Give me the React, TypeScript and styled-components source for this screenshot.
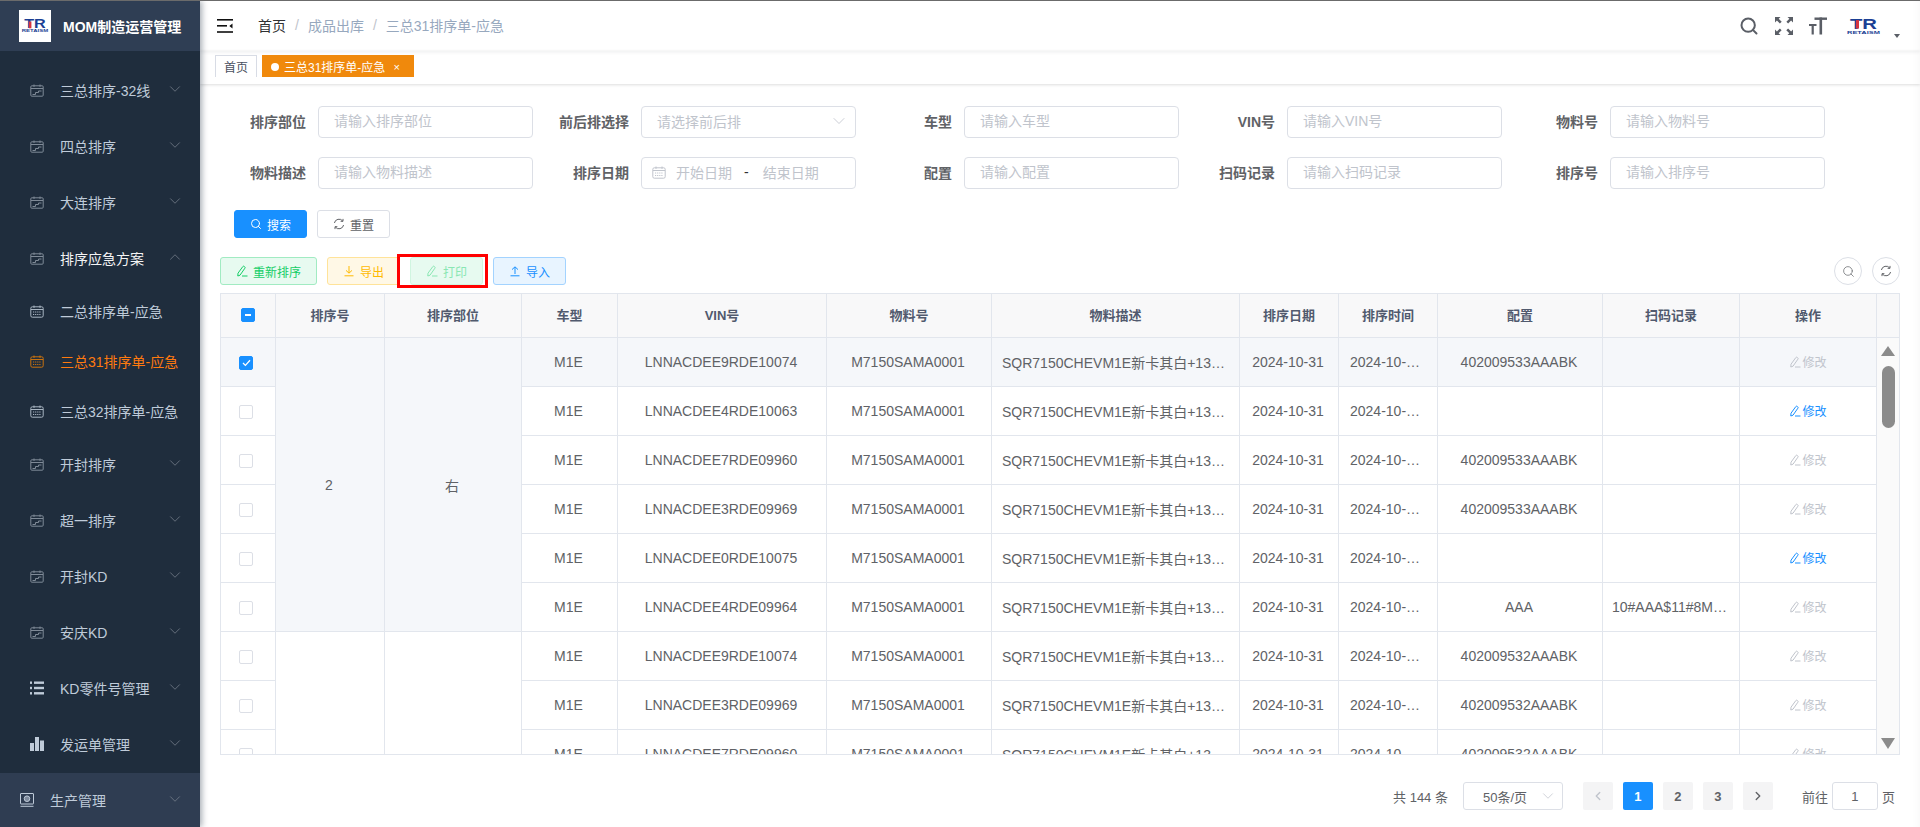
import React from "react";
import styled, { createGlobalStyle, css } from "styled-components";
import { Search, ChevronDown, ChevronUp, ChevronLeft, ChevronRight } from "lucide-react";

const GlobalStyle = createGlobalStyle`
  html, body {
    margin: 0;
    height: 100%;
    overflow: hidden;
    font-family: "Liberation Sans", "Noto Sans CJK SC", sans-serif;
    background: #fff;
  }
  * { box-sizing: border-box; }
  #root { height: 100%; }
`;

const Page = styled.div`
  display: flex;
  height: 827px;
  border-top: 1px solid #6b6b6b;
  overflow: hidden;
`;

/* sidebar */
const Sidebar = styled.aside`
  width: 200px;
  flex: none;
  background: #1f2d3d;
  box-shadow: 2px 0 6px rgba(0, 21, 41, 0.35);
  overflow: hidden;
  z-index: 2;
`;

const Brand = styled.div`
  height: 50px;
  background: #2f3e54;
  display: flex;
  align-items: center;
  padding-left: 19px;
  gap: 12px;
  margin-bottom: 12px;
`;

const BrandBox = styled.div`
  width: 32px;
  height: 32px;
  background: #fff;
  display: flex;
  align-items: center;
  justify-content: center;
`;

const BrandName = styled.span`
  color: #fff;
  font-size: 14px;
  font-weight: 700;
`;

const MenuRow = styled.div<{ $sub?: boolean; $active?: boolean; $root?: boolean; $open?: boolean }>`
  height: ${(p) => (p.$sub ? 50 : 56)}px;
  display: flex;
  align-items: center;
  font-size: 14px;
  color: ${(p) => (p.$active ? "#ff7a0f" : p.$open ? "#f4f4f5" : "#bfcbd9")};
  padding: 0 16px 0 ${(p) => (p.$root ? 20 : 30)}px;
  background: ${(p) => (p.$root ? "#2f3d52" : "transparent")};
`;

const MenuIcon = styled.span`
  width: 14px;
  height: 14px;
  margin: -2px 16px 0 0;
  display: inline-flex;
  align-items: center;
  justify-content: center;
  flex: none;
`;

const MenuText = styled.span`
  flex: 1;
  margin-top: -3px;
  white-space: nowrap;
`;

const MenuArrow = styled.span`
  color: #79838f;
  display: inline-flex;
  margin-top: -5px;
`;

/* main column */
const Main = styled.main`
  flex: 1;
  min-width: 0;
  display: flex;
  flex-direction: column;
  box-shadow: inset -10px 0 10px -10px rgba(0, 0, 0, 0.05);
`;

const Navbar = styled.header`
  height: 50px;
  flex: none;
  display: flex;
  align-items: center;
  padding: 0 20px 0 17px;
  box-shadow: 0 1px 4px rgba(0, 21, 41, 0.08);
`;

const Hamburger = styled.span`
  display: inline-flex;
  margin-right: 25px;
`;

const Crumbs = styled.nav`
  flex: 1;
  display: flex;
  align-items: center;
  padding-bottom: 2px;
  font-size: 14px;
  color: #97a8be;
`;

const CrumbHome = styled.span`
  color: #303133;
`;

const CrumbSep = styled.span`
  margin: 0 9px;
  color: #c0c4cc;
`;

const NavTools = styled.div`
  display: flex;
  align-items: center;
  color: #5a5e66;
`;

const NavTool = styled.span`
  display: inline-flex;
  margin-right: 16px;
`;

const NavLogo = styled.span`
  display: inline-flex;
  margin-left: 3px;
`;

const Caret = styled.span`
  width: 0;
  height: 0;
  margin: 20px 0 0 13px;
  border-left: 3.5px solid transparent;
  border-right: 3.5px solid transparent;
  border-top: 4px solid #5a5e66;
`;

const TagBar = styled.div`
  height: 33px;
  flex: none;
  display: flex;
  align-items: flex-start;
  gap: 5px;
  padding: 4px 0 0 15px;
  box-shadow: 0 1px 3px rgba(0, 0, 0, 0.12), 0 0 3px rgba(0, 0, 0, 0.04);
`;

const Tag = styled.div<{ $active?: boolean }>`
  height: 22px;
  display: flex;
  align-items: center;
  font-size: 12px;
  padding: ${(p) => (p.$active ? "0 13px 0 8px" : "0 8px")};
  color: ${(p) => (p.$active ? "#fff" : "#495060")};
  background: ${(p) => (p.$active ? "#f0890c" : "#fff")};
  border: 1px solid ${(p) => (p.$active ? "#f0890c" : "#d8dce5")};
  border-bottom: none;
`;

const TagDot = styled.span`
  width: 8px;
  height: 8px;
  border-radius: 50%;
  background: #fff;
  margin-right: 5px;
`;

const TagClose = styled.span`
  font-size: 11px;
  margin-left: 8px;
`;

const Content = styled.div`
  flex: 1;
  min-height: 0;
  padding: 22px 20px 0;
`;

/* filter form */
const FilterGrid = styled.div`
  display: grid;
  grid-template-columns: repeat(5, 315px);
  column-gap: 8px;
  row-gap: 19px;
  margin-left: -2px;
`;

const Field = styled.label`
  display: flex;
  align-items: center;
`;

const FieldName = styled.span`
  width: 100px;
  padding: 0 12px 2px 0;
  text-align: right;
  font-size: 14px;
  font-weight: 700;
  color: #606266;
  white-space: nowrap;
`;

const boxStyle = css`
  width: 215px;
  height: 32px;
  border: 1px solid #dcdfe6;
  border-radius: 4px;
  background: #fff;
  font-family: inherit;
  font-size: 14px;
`;

const TextInput = styled.input`
  ${boxStyle}
  padding: 0 15px 2px;
  outline: none;
  &::placeholder { color: #c0c4cc; opacity: 1; }
`;

const SelectBox = styled.div`
  ${boxStyle}
  display: flex;
  align-items: center;
  justify-content: space-between;
  padding: 0 6px 2px 15px;
  color: #c0c4cc;
`;

const DateBox = styled.div`
  ${boxStyle}
  display: flex;
  align-items: center;
  padding: 0 10px 2px;
  color: #c0c4cc;
`;

const DateText = styled.span`
  margin-left: 10px;
  white-space: nowrap;
`;

const DateDash = styled.span`
  color: #303133;
  margin: 0 14px 0 12px;
`;

const ButtonRow = styled.div<{ $top: number; $left?: number }>`
  display: flex;
  align-items: center;
  gap: 10px;
  margin-top: ${(p) => p.$top}px;
  padding-left: ${(p) => p.$left ?? 0}px;
`;

const palette = {
  blue: { bg: "#1890ff", border: "#1890ff", color: "#fff" },
  plain: { bg: "#fff", border: "#dcdfe6", color: "#606266" },
  green: { bg: "#e7faf0", border: "#a1ebc2", color: "#13ce66" },
  greenOff: { bg: "#e7faf0", border: "#d0f5e0", color: "#89e7b3" },
  yellow: { bg: "#fff8e6", border: "#ffe399", color: "#ffba00" },
  sky: { bg: "#e8f4ff", border: "#a3d3ff", color: "#1890ff" },
};

const Btn = styled.button<{ $kind: keyof typeof palette }>`
  height: 28px;
  display: inline-flex;
  align-items: center;
  gap: 5px;
  padding: 0 15px;
  border-radius: 3px;
  border: 1px solid ${(p) => palette[p.$kind].border};
  background: ${(p) => palette[p.$kind].bg};
  color: ${(p) => palette[p.$kind].color};
  font-family: inherit;
  font-size: 12px;
`;

const Highlighted = styled.span`
  position: relative;
  display: inline-flex;
`;

const RedBox = styled.span`
  position: absolute;
  left: -13px;
  top: -3px;
  width: 91px;
  height: 34px;
  border: 3px solid #f00;
  pointer-events: none;
`;

const Spacer = styled.span`
  flex: 1;
`;

const RoundBtn = styled.button`
  width: 28px;
  height: 28px;
  padding: 0;
  border-radius: 50%;
  border: 1px solid #dcdfe6;
  background: #fff;
  color: #606266;
  display: inline-flex;
  align-items: center;
  justify-content: center;
`;

/* table */
const TableWrap = styled.div`
  margin-top: 8px;
  width: 1680px;
  height: 462px;
  border: 1px solid #e2e6ed;
  overflow: hidden;
`;

const HeadRow = styled.div`
  display: flex;
  height: 44px;
  background: #f8f8f9;
`;

const BodyArea = styled.div`
  display: flex;
  height: 416px;
`;

const BodyClip = styled.div`
  width: 1656px;
  height: 416px;
  overflow: hidden;
`;

const Grid = styled.table`
  width: 1656px;
  table-layout: fixed;
  border-collapse: separate;
  border-spacing: 0;
  font-size: 14px;
  color: #606266;
`;

const Th = styled.th`
  height: 44px;
  padding: 0 10px 2px;
  background: #f8f8f9;
  color: #515a6e;
  font-size: 13px;
  font-weight: 700;
  border-right: 1px solid #e2e6ed;
  border-bottom: 1px solid #e2e6ed;
  text-align: center;
`;

const Td = styled.td<{ $shade?: boolean; $pad?: number }>`
  height: 49px;
  padding: 0 ${(p) => (p.$pad ?? 10) + 2}px 0 ${(p) => p.$pad ?? 10}px;
  background: ${(p) => (p.$shade ? "#f5f7fa" : "#fff")};
  border-right: 1px solid #e2e6ed;
  border-bottom: 1px solid #e2e6ed;
  text-align: center;
  white-space: nowrap;
  overflow: hidden;
  text-overflow: ellipsis;
`;

const GutterHead = styled.div`
  flex: 1;
  border-bottom: 1px solid #e2e6ed;
`;

const Check = styled.span<{ $on?: boolean; $row?: boolean }>`
  width: 14px;
  height: 14px;
  display: inline-flex;
  align-items: center;
  justify-content: center;
  vertical-align: middle;
  border-radius: 2px;
  border: 1px solid ${(p) => (p.$on ? "#1890ff" : "#dcdfe6")};
  background: ${(p) => (p.$on ? "#1890ff" : "#fff")};
  margin-right: ${(p) => (p.$row ? 2 : 0)}px;
`;

const CheckDash = styled.span`
  width: 6px;
  height: 2px;
  background: #fff;
`;

const EditLink = styled.span<{ $off?: boolean }>`
  display: inline-flex;
  align-items: center;
  gap: 1px;
  margin-left: 2px;
  font-size: 12px;
  color: ${(p) => (p.$off ? "#c0c4cc" : "#1890ff")};
`;

const Scrollbar = styled.div`
  flex: 1;
  background: #fafafa;
  display: flex;
  flex-direction: column;
  align-items: center;
  padding: 8px 0 5px;
`;

const ScrollThumb = styled.div`
  width: 13px;
  height: 62px;
  border-radius: 7px;
  background: #8b8b8b;
  margin-top: 10px;
`;

const ScrollArrow = styled.span<{ $down?: boolean }>`
  width: 0;
  height: 0;
  border-left: 7px solid transparent;
  border-right: 7px solid transparent;
  ${(p) =>
    p.$down
      ? css`
          border-top: 11px solid #8b8b8b;
          margin-top: auto;
        `
      : css`
          border-bottom: 10px solid #8b8b8b;
        `}
`;

/* pagination */
const Pager = styled.div`
  margin-top: 27px;
  height: 28px;
  display: flex;
  align-items: center;
  justify-content: flex-end;
  padding-right: 5px;
  font-size: 13px;
  color: #606266;
`;

const PageSize = styled.div`
  width: 100px;
  height: 28px;
  margin: 0 20px 0 15px;
  padding: 0 5px 0 19px;
  display: flex;
  align-items: center;
  justify-content: space-between;
  border: 1px solid #dcdfe6;
  border-radius: 3px;
`;

const PageBtn = styled.button<{ $current?: boolean; $off?: boolean }>`
  width: 30px;
  height: 28px;
  margin-right: 10px;
  padding: 0;
  border: none;
  border-radius: 2px;
  font-family: inherit;
  font-size: 13px;
  font-weight: 700;
  display: inline-flex;
  align-items: center;
  justify-content: center;
  background: ${(p) => (p.$current ? "#1890ff" : "#f4f4f5")};
  color: ${(p) => (p.$current ? "#fff" : p.$off ? "#c0c4cc" : "#606266")};
`;

const JumpInput = styled.div`
  width: 46px;
  height: 28px;
  margin: 0 4px;
  border: 1px solid #dcdfe6;
  border-radius: 3px;
  display: flex;
  align-items: center;
  justify-content: center;
`;

const JumpLabel = styled.span`
  margin-left: 19px;
`;

/* drawn icons */
const PlanIcon = ({ dim }: { dim?: boolean }) => (
  <svg width="14" height="13" viewBox="0 0 14 13" fill="none" stroke={dim ? "#7f8a97" : "currentColor"} strokeWidth="1">
    <rect x="0.8" y="1.8" width="12.4" height="10.4" rx="1" />
    <path d="M1 4.5h12M4 .5v2.4M10 .5v2.4" />
    <path d="M2.5 10.5h3V8.5h3V7h3" />
  </svg>
);

const DayIcon = ({ color = "#a9b5c2" }: { color?: string }) => (
  <svg width="14" height="13" viewBox="0 0 14 13" fill="none" stroke={color} strokeWidth="1">
    <rect x="0.8" y="1.8" width="12.4" height="10.4" rx="1.5" />
    <path d="M1 4.5h12M4 .5v2.4M10 .5v2.4" />
    <path d="M3 7h8M3 9.5h8" strokeDasharray="1.2 0.9" />
  </svg>
);

const ListIcon = () => (
  <svg width="14" height="14" viewBox="0 0 14 14" fill="#bfcbd9">
    <rect x="0" y="0.5" width="2" height="2.4" />
    <rect x="4" y="0.5" width="10" height="2.4" />
    <rect x="0" y="5.8" width="2" height="2.4" />
    <rect x="4" y="5.8" width="10" height="2.4" />
    <rect x="0" y="11.1" width="2" height="2.4" />
    <rect x="4" y="11.1" width="10" height="2.4" />
  </svg>
);

const BarsIcon = () => (
  <svg width="14" height="14" viewBox="0 0 14 14" fill="#bfcbd9">
    <rect x="0" y="6" width="4" height="8" />
    <rect x="5" y="0" width="4" height="14" />
    <rect x="10" y="3.5" width="4" height="10.5" />
  </svg>
);

const MonitorIcon = () => (
  <svg width="14" height="14" viewBox="0 0 14 14" fill="none" stroke="#bfcbd9" strokeWidth="1">
    <rect x="0.5" y="0.5" width="13" height="10.5" rx="0.5" />
    <circle cx="7" cy="5.7" r="2.8" fill="#bfcbd9" fillOpacity="0.55" />
    <path d="M0.5 13.3h13" />
  </svg>
);

const Pencil = ({ size = 12 }: { size?: number }) => (
  <svg width={size} height={size} viewBox="0 0 12 12" fill="none" stroke="currentColor" strokeWidth="1">
    <path d="M2 8.2 6.8 1.6a1 1 0 0 1 1.4-.2l.5.4a1 1 0 0 1 .2 1.4L4 10.2l-2.2.8z" />
    <path d="M6 11h5.5" />
  </svg>
);

const ArrowLine = ({ up }: { up?: boolean }) => (
  <svg width="12" height="12" viewBox="0 0 12 12" fill="none" stroke="currentColor" strokeWidth="1">
    {up ? <path d="M6 9V2M3 4.6 6 1.8l3 2.8M1.5 10.8h9" /> : <path d="M6 1v7M3 5.4l3 2.8 3-2.8M1.5 10.8h9" />}
  </svg>
);

const Refresh = () => (
  <svg width="12" height="12" viewBox="0 0 12 12" fill="none" stroke="currentColor" strokeWidth="1">
    <path d="M1.4 5A4.7 4.7 0 0 1 9.8 3.1M10.6 7a4.7 4.7 0 0 1-8.4 1.9" />
    <path d="M10 .9v2.4H7.6M2 11.1V8.7h2.4" />
  </svg>
);

const MenuLines = () => (
  <svg width="16" height="14" viewBox="0 0 16 14" fill="#111">
    <rect x="0" y="0" width="16" height="1.6" />
    <rect x="0" y="6" width="10" height="1.6" />
    <rect x="0" y="12.2" width="16" height="1.6" />
    <path d="M15.5 4.4v5L12.3 6.9z" />
  </svg>
);

const Corners = () => (
  <svg width="18" height="18" viewBox="0 0 18 18" fill="currentColor">
    <path d="M0 0h5.5L3.7 1.8l3 3-1.8 1.8-3-3L0 5.5zM18 0v5.5l-1.9-1.9-3 3-1.7-1.8 3-3L12.5 0zM0 18v-5.5l1.9 1.9 3-3 1.7 1.8-3 3L5.5 18zM18 18h-5.5l1.8-1.8-3-3 1.8-1.8 3 3 1.9-1.9z" />
  </svg>
);

const FontSizeIcon = () => (
  <svg width="18" height="18" viewBox="0 0 18 18" fill="currentColor">
    <rect x="5.5" y="0.5" width="12.5" height="2.4" />
    <rect x="10.5" y="0.5" width="2.6" height="17" />
    <rect x="0" y="7" width="7.5" height="2" />
    <rect x="2.6" y="7" width="2.2" height="10.5" />
  </svg>
);

const LogoMark = ({ width }: { width: number }) => (
  <svg width={width} height={width * 0.52} viewBox="0 0 35 18">
    <text x="4" y="11.5" textLength="27" lengthAdjust="spacingAndGlyphs" fontFamily="Liberation Sans" fontSize="15" fontWeight="700" fill="#1b3f94">
      TR
    </text>
    <rect x="10" y="3" width="3" height="8.5" fill="#d8343f" />
    <text x="1" y="16.5" textLength="33" lengthAdjust="spacingAndGlyphs" fontFamily="Liberation Sans" fontSize="4" fontWeight="700" fill="#1b3f94">
      RETAISM
    </text>
  </svg>
);

const PLAN = <PlanIcon dim />;

const topMenu = [
  { label: "三总排序-32线" },
  { label: "四总排序" },
  { label: "大连排序" },
];

const lowerMenu = [
  { label: "开封排序", icon: PLAN },
  { label: "超一排序", icon: PLAN },
  { label: "开封KD", icon: PLAN },
  { label: "安庆KD", icon: PLAN },
  { label: "KD零件号管理", icon: <ListIcon /> },
  { label: "发运单管理", icon: <BarsIcon /> },
];

const columns = [55, 109, 137, 96, 209, 165, 248, 99, 99, 165, 137, 137];
const headings = ["", "排序号", "排序部位", "车型", "VIN号", "物料号", "物料描述", "排序日期", "排序时间", "配置", "扫码记录", "操作"];

const DESC = "SQR7150CHEVM1E新卡其白+13500";
const TIME = "2024-10-31 08";
const SCAN = "10#AAA$11#8M71";

const rows = [
  { vin: "LNNACDEE9RDE10074", conf: "402009533AAABK", scan: "", off: true },
  { vin: "LNNACDEE4RDE10063", conf: "", scan: "", off: false },
  { vin: "LNNACDEE7RDE09960", conf: "402009533AAABK", scan: "", off: true },
  { vin: "LNNACDEE3RDE09969", conf: "402009533AAABK", scan: "", off: true },
  { vin: "LNNACDEE0RDE10075", conf: "", scan: "", off: false },
  { vin: "LNNACDEE4RDE09964", conf: "AAA", scan: SCAN, off: true },
  { vin: "LNNACDEE9RDE10074", conf: "402009532AAABK", scan: "", off: true },
  { vin: "LNNACDEE3RDE09969", conf: "402009532AAABK", scan: "", off: true },
  { vin: "LNNACDEE7RDE09960", conf: "402009532AAABK", scan: "", off: true },
];

const fields: { label: string; hint?: string; kind?: "select" | "date" }[] = [
  { label: "排序部位", hint: "请输入排序部位" },
  { label: "前后排选择", hint: "请选择前后排", kind: "select" },
  { label: "车型", hint: "请输入车型" },
  { label: "VIN号", hint: "请输入VIN号" },
  { label: "物料号", hint: "请输入物料号" },
  { label: "物料描述", hint: "请输入物料描述" },
  { label: "排序日期", kind: "date" },
  { label: "配置", hint: "请输入配置" },
  { label: "扫码记录", hint: "请输入扫码记录" },
  { label: "排序号", hint: "请输入排序号" },
];

const Cols = () => (
  <colgroup>
    {columns.map((w, i) => (
      <col key={i} width={w} />
    ))}
  </colgroup>
);

const Chevron = () => (
  <MenuArrow><ChevronDown size={18} strokeWidth={1} /></MenuArrow>
);

const App: React.FC = () => {
  return (
    <>
      <GlobalStyle />
      <Page>
        <Sidebar>
          <Brand>
            <BrandBox>
              <LogoMark width={28} />
            </BrandBox>
            <BrandName>MOM制造运营管理</BrandName>
          </Brand>
          {topMenu.map((m) => (
            <MenuRow key={m.label}>
              <MenuIcon>{PLAN}</MenuIcon>
              <MenuText>{m.label}</MenuText>
              <Chevron />
            </MenuRow>
          ))}
          <MenuRow $open>
            <MenuIcon>{PLAN}</MenuIcon>
            <MenuText>排序应急方案</MenuText>
            <MenuArrow><ChevronUp size={18} strokeWidth={1} /></MenuArrow>
          </MenuRow>
          <MenuRow $sub>
            <MenuIcon><DayIcon /></MenuIcon>
            <MenuText>二总排序单-应急</MenuText>
          </MenuRow>
          <MenuRow $sub $active>
            <MenuIcon><DayIcon color="#c9720f" /></MenuIcon>
            <MenuText>三总31排序单-应急</MenuText>
          </MenuRow>
          <MenuRow $sub>
            <MenuIcon><DayIcon /></MenuIcon>
            <MenuText>三总32排序单-应急</MenuText>
          </MenuRow>
          {lowerMenu.map((m) => (
            <MenuRow key={m.label}>
              <MenuIcon>{m.icon}</MenuIcon>
              <MenuText>{m.label}</MenuText>
              <Chevron />
            </MenuRow>
          ))}
          <MenuRow $root>
            <MenuIcon><MonitorIcon /></MenuIcon>
            <MenuText>生产管理</MenuText>
            <Chevron />
          </MenuRow>
        </Sidebar>

        <Main>
          <Navbar>
            <Hamburger><MenuLines /></Hamburger>
            <Crumbs>
              <CrumbHome>首页</CrumbHome>
              <CrumbSep>/</CrumbSep>
              <span>成品出库</span>
              <CrumbSep>/</CrumbSep>
              <span>三总31排序单-应急</span>
            </Crumbs>
            <NavTools>
              <NavTool><Search size={20} strokeWidth={2.4} /></NavTool>
              <NavTool><Corners /></NavTool>
              <NavTool><FontSizeIcon /></NavTool>
              <NavLogo><LogoMark width={35} /></NavLogo>
              <Caret />
            </NavTools>
          </Navbar>
          <TagBar>
            <Tag>首页</Tag>
            <Tag $active>
              <TagDot />
              <span>三总31排序单-应急</span>
              <TagClose>×</TagClose>
            </Tag>
          </TagBar>

          <Content>
            <FilterGrid>
              {fields.map((f) => (
                <Field key={f.label}>
                  <FieldName>{f.label}</FieldName>
                  {f.kind === "select" ? (
                    <SelectBox>
                      <span>{f.hint}</span>
                      <ChevronDown size={20} strokeWidth={1} />
                    </SelectBox>
                  ) : f.kind === "date" ? (
                    <DateBox>
                      <DayIcon color="#c0c4cc" />
                      <DateText>开始日期</DateText>
                      <DateDash>-</DateDash>
                      <span>结束日期</span>
                    </DateBox>
                  ) : (
                    <TextInput placeholder={f.hint} />
                  )}
                </Field>
              ))}
            </FilterGrid>

            <ButtonRow $top={21} $left={14}>
              <Btn $kind="blue"><Search size={12} />搜索</Btn>
              <Btn $kind="plain"><Refresh />重置</Btn>
            </ButtonRow>

            <ButtonRow $top={19}>
              <Btn $kind="green"><Pencil />重新排序</Btn>
              <Btn $kind="yellow"><ArrowLine />导出</Btn>
              <Highlighted>
                <Btn $kind="greenOff"><Pencil />打印</Btn>
                <RedBox />
              </Highlighted>
              <Btn $kind="sky"><ArrowLine up />导入</Btn>
              <Spacer />
              <RoundBtn><Search size={13} strokeWidth={1.3} /></RoundBtn>
              <RoundBtn><Refresh /></RoundBtn>
            </ButtonRow>

            <TableWrap>
              <HeadRow>
                <Grid>
                  <Cols />
                  <thead>
                    <tr>
                      {headings.map((h, i) => (
                        <Th key={i}>
                          {i === 0 ? <Check $on><CheckDash /></Check> : h}
                        </Th>
                      ))}
                    </tr>
                  </thead>
                </Grid>
                <GutterHead />
              </HeadRow>
              <BodyArea>
                <BodyClip>
                  <Grid>
                    <Cols />
                    <tbody>
                      {rows.map((r, i) => {
                        const shade = i === 0;
                        return (
                          <tr key={i}>
                            <Td $shade={shade}>
                              <Check $on={shade} $row>
                                {shade && (
                                  <svg width="9" height="8" viewBox="0 0 9 8" fill="none" stroke="#fff" strokeWidth="1.3">
                                    <path d="M1 4l2.4 2.4L8 1.2" />
                                  </svg>
                                )}
                              </Check>
                            </Td>
                            {i === 0 && <Td rowSpan={6} $shade>2</Td>}
                            {i === 0 && <Td rowSpan={6} $shade>右</Td>}
                            {i === 6 && <Td rowSpan={3} />}
                            {i === 6 && <Td rowSpan={3} />}
                            <Td $shade={shade}>M1E</Td>
                            <Td $shade={shade}>{r.vin}</Td>
                            <Td $shade={shade}>M7150SAMA0001</Td>
                            <Td $shade={shade}>{DESC}</Td>
                            <Td $shade={shade}>2024-10-31</Td>
                            <Td $shade={shade} $pad={11}>{TIME}</Td>
                            <Td $shade={shade}>{r.conf}</Td>
                            <Td $shade={shade} $pad={9}>{r.scan}</Td>
                            <Td $shade={shade}>
                              <EditLink $off={r.off}><Pencil />修改</EditLink>
                            </Td>
                          </tr>
                        );
                      })}
                    </tbody>
                  </Grid>
                </BodyClip>
                <Scrollbar>
                  <ScrollArrow />
                  <ScrollThumb />
                  <ScrollArrow $down />
                </Scrollbar>
              </BodyArea>
            </TableWrap>

            <Pager>
              <span>共 144 条</span>
              <PageSize>
                <span>50条/页</span>
                <ChevronDown size={18} strokeWidth={1} color="#c0c4cc" />
              </PageSize>
              <PageBtn $off><ChevronLeft size={14} strokeWidth={2.4} /></PageBtn>
              <PageBtn $current>1</PageBtn>
              <PageBtn>2</PageBtn>
              <PageBtn>3</PageBtn>
              <PageBtn><ChevronRight size={14} strokeWidth={2.4} /></PageBtn>
              <JumpLabel>前往</JumpLabel>
              <JumpInput>1</JumpInput>
              <span>页</span>
            </Pager>
          </Content>
        </Main>
      </Page>
    </>
  );
};

export default App;
